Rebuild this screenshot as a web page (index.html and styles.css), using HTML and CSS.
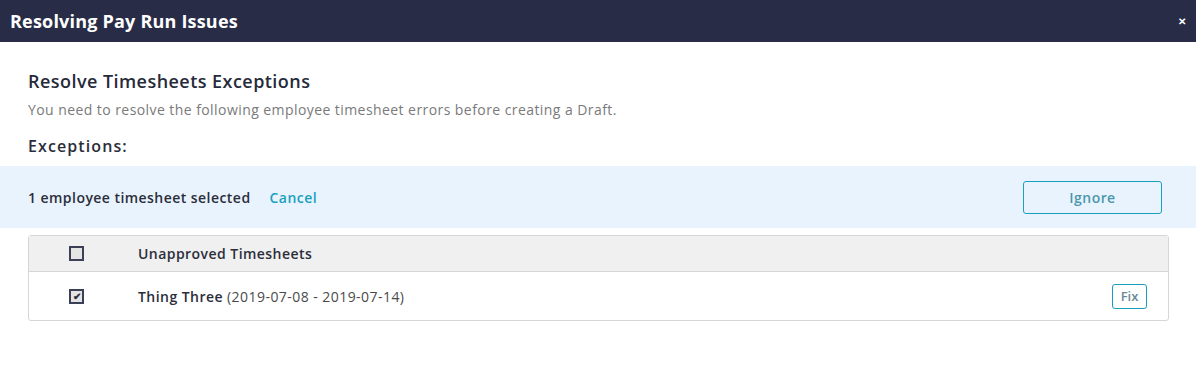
FILE: index.html
```html
<!DOCTYPE html>
<html lang="en">
<head>
    <meta charset="UTF-8">
    <title>Resolving Pay Run Issues</title>
    <link rel="stylesheet" href="styles.css">
</head>
<body>
    <div class="modal">
        <div class="modal-header">
            <h1>Resolving Pay Run Issues</h1>
            <span class="close">&#x2715;</span>
        </div>
        <div class="modal-body">
            <h2>Resolve Timesheets Exceptions</h2>
            <p class="hint">You need to resolve the following employee timesheet errors before creating a Draft.</p>
            <h3>Exceptions:</h3>
        </div>
        <div class="selection-bar">
            <span class="selected-count">1 employee timesheet selected</span>
            <a class="cancel">Cancel</a>
            <button class="ignore-btn">Ignore</button>
        </div>
        <div class="table-wrap">
            <div class="row head-row">
                <div class="check-col"><span class="checkbox"></span></div>
                <div class="name-col">Unapproved Timesheets</div>
            </div>
            <div class="row">
                <div class="check-col"><span class="checkbox checked">&#x2714;</span></div>
                <div class="name-col"><strong>Thing Three</strong> <span class="dates">(2019-07-08 - 2019-07-14)</span></div>
                <button class="fix-btn">Fix</button>
            </div>
        </div>
    </div>
</body>
</html>
```

FILE: styles.css
```css
body {
    margin: 0;
    font-family: "Open Sans", Arial, sans-serif;
    background-color: #ffffff;
    color: #2b2e3a;
}
.modal-header {
    height: 42px;
    background-color: #282c47;
    display: flex;
    align-items: center;
    justify-content: space-between;
    padding: 0 10px;
}
.modal-header h1 {
    margin: 0;
    color: #fff;
    font-size: 18px;
    font-weight: 700;
    letter-spacing: 0.2px;
}
.close {
    color: #fff;
    font-size: 10px;
    font-weight: 700;
}
.modal-body {
    padding: 25px 28px 0;
}
.modal-body h2 {
    margin: 0;
    font-size: 18px;
    font-weight: 600;
    color: #262a3a;
    line-height: 28px;
    letter-spacing: 0.45px;
}
.hint {
    margin: 5px 0 0;
    font-size: 14px;
    color: #7a7a7a;
    line-height: 20px;
    letter-spacing: 0.43px;
}
.modal-body h3 {
    margin: 15px 0 0;
    font-size: 16px;
    font-weight: 600;
    line-height: 22px;
    padding-bottom: 9px;
    letter-spacing: 1.1px;
}
.selection-bar {
    background-color: #e9f3fd;
    height: 62px;
    display: flex;
    align-items: center;
    padding: 0 34px 0 28px;
    font-size: 14px;
    letter-spacing: 0.45px;
}
.selected-count {
    font-weight: 600;
    color: #2b2e3a;
}
.cancel {
    margin-left: 19px;
    color: #1aa0bf;
    font-weight: 600;
    cursor: pointer;
}
.ignore-btn {
    margin-left: auto;
    width: 139px;
    height: 33px;
    background: transparent;
    border: 1px solid #1aa0bf;
    border-radius: 3px;
    color: #4b97ad;
    font-family: inherit;
    font-size: 14px;
    font-weight: 600;
    letter-spacing: 0.45px;
}
.table-wrap {
    margin: 7px 27px 0 28px;
    border: 1px solid #d6d6d6;
    border-radius: 3px;
    font-size: 14px;
    letter-spacing: 0.45px;
}
.row {
    display: flex;
    align-items: center;
    height: 48px;
    padding-right: 21px;
}
.head-row {
    height: 35px;
    background-color: #f0f0f0;
    border-bottom: 1px solid #d6d6d6;
    font-weight: 600;
}
.check-col {
    width: 95px;
    display: flex;
    justify-content: center;
    margin-right: 14px;
}
.checkbox {
    width: 11px;
    height: 11px;
    border: 2px solid #3c4056;
    background-color: #e4e4e4;
    display: flex;
    align-items: center;
    justify-content: center;
    font-size: 10px;
    font-weight: 700;
    color: #2b2e3a;
    line-height: 1;
    letter-spacing: 0;
}
.name-col {
    flex: 1;
}
.name-col strong {
    font-weight: 600;
}
.dates {
    color: #4a4a4a;
}
.fix-btn {
    width: 35px;
    height: 25px;
    background: #fff;
    border: 1px solid #1aa0bf;
    border-radius: 3px;
    color: #6a8a99;
    font-family: inherit;
    font-size: 13px;
    font-weight: 600;
    padding: 0;
}
```
